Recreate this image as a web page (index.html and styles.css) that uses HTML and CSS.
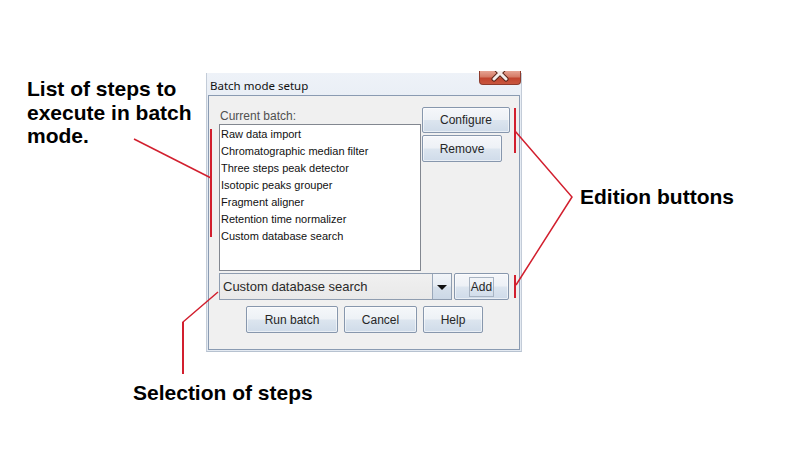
FILE: index.html
```html
<!DOCTYPE html>
<html>
<head>
<meta charset="utf-8">
<title>Batch mode setup</title>
<link rel="stylesheet" href="styles.css">
</head>
<body>
<div class="stage">
  <div class="note note-list">List of steps to<br>execute in batch<br>mode.</div>
  <div class="note note-edit">Edition buttons</div>
  <div class="note note-select">Selection of steps</div>

  <div class="dialog">
    <div class="titlebar">
      <span class="title">Batch mode setup</span>
      <div class="close">
        <svg width="42" height="14" viewBox="0 0 42 14">
          <path d="M15 -4 L27 8 M27 -4 L15 8" stroke="#5a2418" stroke-width="5" stroke-linecap="round" fill="none"/>
          <path d="M15 -4 L27 8 M27 -4 L15 8" stroke="#f4eeec" stroke-width="3" stroke-linecap="round" fill="none"/>
        </svg>
      </div>
    </div>
    <div class="panel">
      <div class="top">
        <div class="left">
          <div class="label">Current batch:</div>
          <ul class="list">
            <li>Raw data import</li>
            <li>Chromatographic median filter</li>
            <li>Three steps peak detector</li>
            <li>Isotopic peaks grouper</li>
            <li>Fragment aligner</li>
            <li>Retention time normalizer</li>
            <li>Custom database search</li>
          </ul>
        </div>
        <div class="right">
          <button class="btn w-configure">Configure</button>
          <button class="btn w-remove">Remove</button>
        </div>
      </div>
      <div class="combo-row">
        <div class="combo">
          <div class="combo-field">Custom database search</div>
          <div class="combo-arrow"><span class="tri"></span></div>
        </div>
        <button class="btn w-add"><span class="focus">Add</span></button>
      </div>
      <div class="actions">
        <button class="btn w-run">Run batch</button>
        <button class="btn w-cancel">Cancel</button>
        <button class="btn w-help">Help</button>
      </div>
    </div>
  </div>

  <svg class="overlay" width="809" height="467" viewBox="0 0 809 467">
    <g stroke="#d21f2e" fill="none" stroke-linejoin="miter">
      <line x1="211" y1="129" x2="211" y2="237" stroke-width="2"/>
      <line x1="134" y1="139" x2="211" y2="178" stroke-width="1.5"/>
      <line x1="515" y1="108" x2="515" y2="153" stroke-width="2"/>
      <polyline points="515,131 572,197 516,285" stroke-width="1.5"/>
      <line x1="515" y1="275" x2="515" y2="298" stroke-width="2"/>
      <polyline points="218,292 183,322 183,374" stroke-width="1.5"/>
      <line x1="183" y1="322" x2="183" y2="374" stroke-width="2"/>
    </g>
  </svg>
</div>
</body>
</html>
```
FILE: styles.css
```css
* { box-sizing: border-box; }
html, body { margin: 0; padding: 0; background: #fff; }
.stage {
  position: relative;
  width: 809px;
  height: 467px;
  overflow: hidden;
  background: #fff;
  font-family: "Liberation Sans", Arial, sans-serif;
}
.note {
  position: absolute;
  font-family: "Liberation Sans", Arial, sans-serif;
  font-weight: bold;
  font-size: 21px;
  line-height: 23.5px;
  color: #000;
  white-space: nowrap;
}
.note-list { left: 27px; top: 77px; }
.note-edit { left: 580px; top: 185px; }
.note-select { left: 133px; top: 381px; }

.overlay { position: absolute; left: 0; top: 0; pointer-events: none; }

.dialog {
  position: absolute;
  left: 206px;
  top: 73px;
  width: 316px;
  height: 279px;
  background: linear-gradient(#eef2f8, #e6ecf4 40px, #e4eaf2);
  border-left: 1px solid #c3ccd8;
  border-right: 1px solid #c3ccd8;
  border-bottom: 1px solid #b7c2d0;
  display: flex;
  flex-direction: column;
}
.titlebar {
  position: relative;
  height: 22px;
  flex: none;
  display: flex;
  align-items: center;
  padding-left: 3px;
}
.title {
  font-family: "Noto Sans", "Open Sans", sans-serif;
  font-size: 11.5px;
  color: #111;
  position: relative;
  top: 1px;
}
.close {
  position: absolute;
  left: 272px;
  top: -2px;
  width: 42px;
  height: 14px;
  border: 1px solid #8e3b2c;
  border-top: none;
  border-radius: 0 0 4px 4px;
  background: linear-gradient(#e6a493, #d57b66 45%, #c1452f 55%, #c9563d);
  overflow: hidden;
}
.close svg { display: block; position: absolute; left: -1px; top: 0; }

.panel {
  flex: none;
  margin: 0 1px;
  height: 255px;
  background: #f0f0f0;
  border: 1px solid #8a9bb2;
  padding: 11px 9px 0 10px;
  display: flex;
  flex-direction: column;
}
.top { display: flex; gap: 1px; }
.left { width: 202px; display: flex; flex-direction: column; }
.label {
  height: 17px;
  line-height: 18px;
  font-size: 12px;
  color: #505050;
  padding-left: 1px;
}
.list {
  margin: 0;
  padding: 1px 0 0 1px;
  list-style: none;
  height: 147px;
  background: #fff;
  border: 1px solid #828790;
  font-size: 11px;
  color: #111;
}
.list li { height: 17px; line-height: 17px; white-space: nowrap; }
.right { display: flex; flex-direction: column; align-items: flex-start; gap: 2px; }

.btn {
  font-family: "Liberation Sans", Arial, sans-serif;
  font-size: 12px;
  color: #262626;
  height: 27px;
  padding: 0;
  border: 1px solid #8797ad;
  border-radius: 2px;
  background: linear-gradient(#f5f7fa, #edf1f6 48%, #dce5ef 52%, #cfdbe9);
  box-shadow: inset 0 0 0 1px rgba(255,255,255,0.55);
  display: flex;
  align-items: center;
  justify-content: center;
}
.w-configure { width: 88px; height: 26px; }
.w-remove { width: 80px; }
.w-add { width: 55px; }
.w-run { width: 92px; }
.w-cancel { width: 73px; }
.w-help { width: 60px; }

.combo-row { margin-top: 2px; display: flex; gap: 2px; height: 27px; }
.combo {
  width: 233px;
  display: flex;
  border: 1px solid #8f9db0;
  background: #ececec;
}
.combo-field {
  flex: 1;
  font-size: 13px;
  color: #2a2a2a;
  line-height: 25px;
  padding-left: 3px;
  white-space: nowrap;
  background: linear-gradient(#f0f0f0, #e9e9e9);
}
.combo-arrow {
  width: 19px;
  border-left: 1px solid #9aa8ba;
  background: linear-gradient(#f2f5f9, #e6ecf3 48%, #d6e0eb 52%, #ccd8e6);
  display: flex;
  align-items: center;
  justify-content: center;
}
.tri {
  width: 0;
  height: 0;
  border-left: 5px solid transparent;
  border-right: 5px solid transparent;
  border-top: 5px solid #111;
  margin-top: 1px;
}
.focus {
  display: block;
  width: 25px;
  height: 20px;
  line-height: 18px;
  border: 1px solid #a7b3c2;
  text-align: center;
}
.actions {
  margin-top: 6px;
  display: flex;
  justify-content: center;
  gap: 6px;
}
```
